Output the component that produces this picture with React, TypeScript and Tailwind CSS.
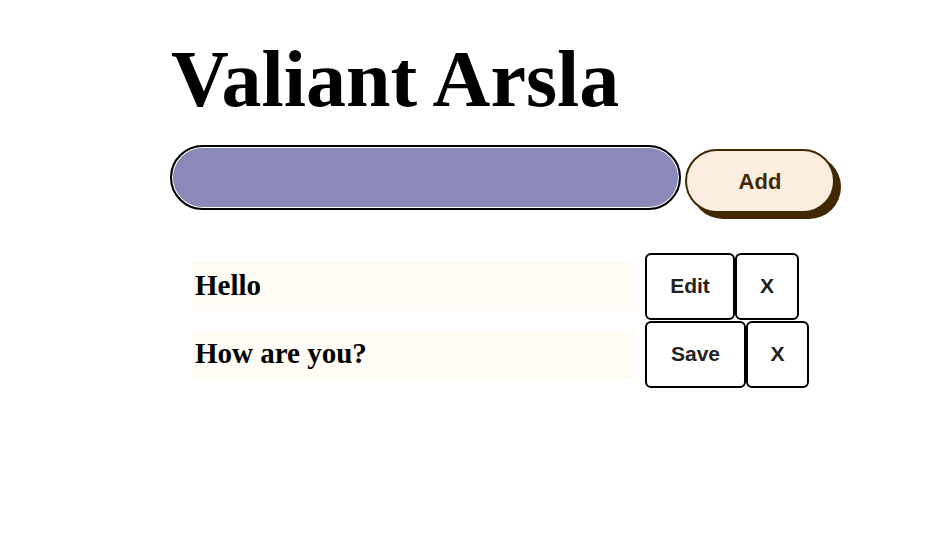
import React from "react";

const serif = { fontFamily: '"Liberation Serif", "Times New Roman", serif' };
const sans = { fontFamily: '"Liberation Sans", Arial, sans-serif' };

function Row({ text, action, w1, w2 }: { text: string; action: string; w1: string; w2: string }) {
  return (
    <li className="flex items-center h-[68px] w-max">
      <div
        className="shrink-0 w-[443px] h-[49px] bg-[#fffcf5] pl-[3px] flex items-center text-[29px] font-bold text-black"
        style={serif}
      >
        {text}
      </div>
      <div className="shrink-0 ml-[10px] flex" style={sans}>
        <button className={`${w1} shrink-0 h-[67px] border-2 border-black rounded-[6px] bg-white text-[21px] font-bold text-[#222]`}>
          {action}
        </button>
        <button className={`${w2} shrink-0 h-[67px] border-2 border-black rounded-[6px] bg-white text-[21px] font-bold text-[#222]`}>
          X
        </button>
      </div>
    </li>
  );
}

export default function App() {
  return (
    <div className="w-[940px] h-[541px] bg-white overflow-hidden">
      <div className="mx-auto w-[600px] pt-[35px]">
        <h1 className="text-[80px] leading-[88px] font-bold text-black pl-[1px]" style={serif}>
          Valiant Arsla
        </h1>
        <form className="mt-[22px] flex items-start gap-[4px] w-[700px]" onSubmit={(e) => e.preventDefault()}>
          <input
            className="shrink-0 w-[511px] h-[65px] rounded-full border-2 border-black bg-[#8a89b8] shadow-[inset_0_0_0_1px_#ffffff] outline-none"
            type="text"
          />
          <button
            className="shrink-0 mt-[4px] w-[150px] h-[64px] rounded-[32px] border-2 border-[#422800] bg-[#fbeee0] shadow-[6px_6px_0_0_#422800] text-[22px] font-bold text-[#422800]"
            style={sans}
          >
            Add
          </button>
        </form>
        <ul className="mt-[39px] pl-[22px] flex flex-col">
          <Row text="Hello" action="Edit" w1="w-[90px]" w2="w-[64px]" />
          <Row text="How are you?" action="Save" w1="w-[101px]" w2="w-[63px]" />
        </ul>
      </div>
    </div>
  );
}
